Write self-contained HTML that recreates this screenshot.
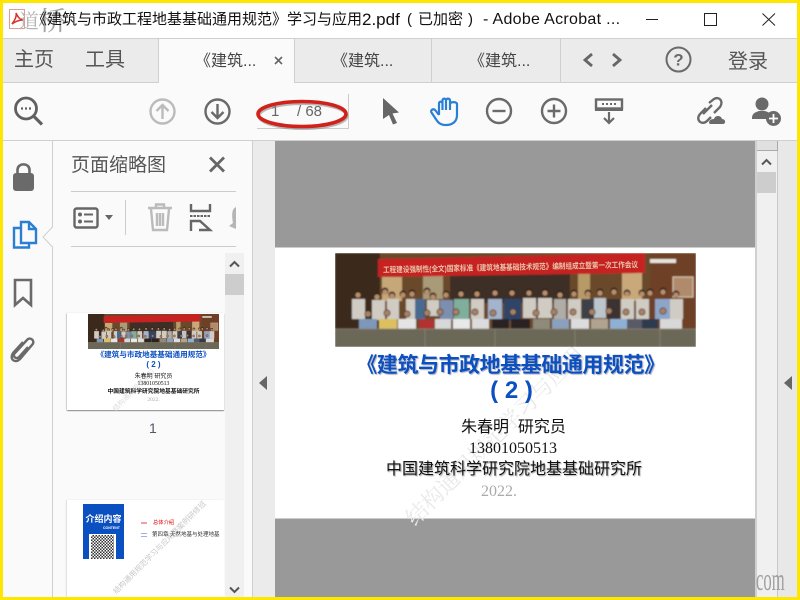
<!DOCTYPE html>
<html><head><meta charset="utf-8"><style>
*{margin:0;padding:0;box-sizing:border-box}
html,body{width:800px;height:600px;overflow:hidden;background:#fff}
body{position:relative;font-family:"Liberation Sans","Noto Sans CJK SC",sans-serif}
.a{position:absolute;white-space:nowrap}
svg{position:absolute;overflow:visible}
.t{font-size:18px;color:#555;line-height:24px}
.s{font-family:"Liberation Serif","Noto Sans CJK SC",serif}
.ti{font-size:15px;line-height:22px;color:#111;top:9px}
</style></head><body>
<div class="a" style="left:0;top:38px;width:800px;height:45px;background:#ebebeb;border-top:1px solid #cfcfcf;border-bottom:1px solid #cfcfcf"></div>
<div class="a" style="left:158px;top:38px;width:137px;height:45px;background:#fafafa;border:1px solid #cfcfcf;border-bottom:0"></div>
<div class="a" style="left:431px;top:39px;width:1px;height:43px;background:#cfcfcf"></div>
<div class="a" style="left:560px;top:39px;width:1px;height:43px;background:#cfcfcf"></div>
<div class="a" style="left:0;top:83px;width:800px;height:58px;background:#fafafa;border-bottom:1px solid #cfcfcf"></div>

<svg style="left:9px;top:9px" width="16" height="20" viewBox="0 0 16 20"><path d="M.5.5H15.500V19.500H.5Z" fill="#fff" stroke="#e09a90"/><path d="M3 15C6 11 8 7 7 4C9 8 10 10 14 11C10 11 7 12 3 15Z" fill="none" stroke="#d8332a" stroke-width="1.500"/></svg>
<div class="a" style="left:19px;top:7px;font-size:20px;line-height:26px;color:#b5b5b5;font-family:'Noto Serif CJK SC',serif">道</div>
<div class="a" style="left:38px;top:6px;font-size:26px;line-height:28px;color:#a0a0a0;font-family:'Noto Serif CJK SC',serif;transform:scaleX(1.15);transform-origin:0 0">桥</div>
<div class="a ti" style="left:32px">《建筑与市政工程地基基础通用规范》学习与应用</div>
<div class="a" style="left:362px;top:9px;font-size:17px;line-height:22px;color:#111">2.pdf</div>
<div class="a ti" style="left:407px">(</div>
<div class="a ti" style="left:418px">已加密</div>
<div class="a ti" style="left:468px">)</div>
<div class="a" style="left:483px;top:9px;font-size:16px;line-height:22px;color:#111;letter-spacing:.3px">- Adobe Acrobat ...</div>
<svg style="left:646px;top:19px" width="12" height="2"><path d="M0 .5H12" stroke="#222"/></svg>
<svg style="left:704px;top:13px" width="13" height="13"><rect x=".5" y=".5" width="12" height="12" fill="none" stroke="#222"/></svg>
<svg style="left:762px;top:13px" width="14" height="13"><path d="M.5.5L13 12.500M13 .5L.5 12.500" stroke="#222"/></svg>

<div class="a t" style="left:14px;top:48px;font-size:20px;color:#555">主页</div>
<div class="a t" style="left:85px;top:48px;font-size:20px;color:#555">工具</div>
<div class="a t" style="left:195px;top:50px;font-size:16px;color:#444">《建筑...</div>
<svg style="left:274px;top:56px" width="9" height="9"><path d="M1 1L8 8M8 1L1 8" stroke="#666" stroke-width="1.600"/></svg>
<div class="a t" style="left:332px;top:50px;font-size:16px;color:#444">《建筑...</div>
<div class="a t" style="left:469px;top:50px;font-size:16px;color:#444">《建筑...</div>
<svg style="left:582px;top:52px" width="40" height="16"><path d="M10 2L3 8L10 14M31 2L38 8L31 14" fill="none" stroke="#666" stroke-width="2.800"/></svg>
<svg style="left:665px;top:46px" width="28" height="28"><circle cx="13.500" cy="13.500" r="12" fill="none" stroke="#6a6a6a" stroke-width="2"/><text x="13.500" y="19.500" text-anchor="middle" font-size="17" font-weight="700" fill="#6a6a6a" font-family="Liberation Sans">?</text></svg>
<div class="a t" style="left:728px;top:50px;font-size:20px;color:#555">登录</div>

<svg style="left:14px;top:97px" width="30" height="30" fill="none" stroke="#606060"><circle cx="12" cy="11.500" r="10.500" stroke-width="2.800"/><path d="M19.500 19L28 27.500" stroke-width="3.200"/><path d="M7 11.500H17" stroke-width="2.200" stroke-dasharray="2 2"/></svg>
<svg style="left:149px;top:98px" width="27" height="27" fill="none" stroke="#bbb" stroke-width="2.400"><circle cx="13.500" cy="13.500" r="12"/><path d="M13.500 21V7M7.500 13L13.500 7L19.500 13"/></svg>
<svg style="left:204px;top:98px" width="27" height="27" fill="none" stroke="#6a6a6a" stroke-width="2.400"><circle cx="13.500" cy="13.500" r="12"/><path d="M13.500 6V20M7.500 14L13.500 20L19.500 14"/></svg>
<div class="a" style="left:257px;top:128px;width:92px;height:1px;background:#ccc"></div>
<div class="a" style="left:348px;top:94px;width:1px;height:35px;background:#ccc"></div>
<div class="a" style="left:271px;top:103px;font-size:15px;line-height:18px;color:#666">1</div>
<div class="a" style="left:297px;top:103px;font-size:15px;line-height:18px;color:#666">/ 68</div>
<svg style="left:256px;top:98px" width="96" height="34"><ellipse cx="47" cy="18" rx="44" ry="12.500" fill="none" stroke="#888" stroke-width="3" opacity=".6"/><ellipse cx="46" cy="16" rx="44" ry="12.500" fill="none" stroke="#d2201a" stroke-width="3.600"/></svg>
<svg style="left:382px;top:98px" width="18" height="27"><path d="M1 0L17 14.500L10.500 15.500L15 25L11 26.500L7 17L1 21Z" fill="#666"/></svg>
<svg style="left:430px;top:97px" width="29" height="30" fill="none" stroke="#2a7fd5" stroke-width="2.200"><path d="M9 18V6.500C9 4 12.500 4 12.500 6.500V13M12.500 13V3.500C12.500 1 16 1 16 3.500V13M16 13V3.500C16 1 20 1 20 3.500V13M20 13V7C20 4.500 27 4.500 27 7V18C27 25 22 28 16 28C10 28 8 25.500 5.500 21.500L1.500 15.500C0 13 3.500 11 5.500 13.500L9 18"/></svg>
<svg style="left:486px;top:98px" width="27" height="27" fill="none" stroke="#6a6a6a" stroke-width="2.400"><circle cx="13" cy="13" r="12"/><path d="M6.500 13H19.500"/></svg>
<svg style="left:541px;top:98px" width="27" height="27" fill="none" stroke="#6a6a6a" stroke-width="2.400"><circle cx="13" cy="13" r="12"/><path d="M6.500 13H19.500M13 6.500V19.500"/></svg>
<svg style="left:595px;top:98px" width="28" height="27"><rect x="1" y="1.500" width="26" height="9" fill="none" stroke="#6a6a6a" stroke-width="2.400"/><path d="M7 6H21" stroke="#6a6a6a" stroke-width="2" stroke-dasharray="2 2"/><path d="M0 12H28" stroke="#6a6a6a" stroke-width="2"/><path d="M14 14V25M9 20L14 25L19 20" fill="none" stroke="#6a6a6a" stroke-width="2.200"/></svg>
<svg style="left:695px;top:97px" width="32" height="29" fill="none" stroke="#6a6a6a" stroke-width="2.400"><path d="M11 11L5 17C0 23 7 29 12 24L16 20M8 17L17 8M14 6L19 2C24 -1 29 4 25 10L19 16"/><path d="M14 26C14 22 18 22 19 22C20 18 26 18 27 22C31 22 31 27 28 27H15Z" fill="#6a6a6a" stroke="none"/></svg>
<svg style="left:751px;top:97px" width="31" height="30"><circle cx="11" cy="7" r="6.500" fill="#6a6a6a"/><path d="M1 21C1 16 5 15 8 14H14C17 15 19 16 20 17C17 19 16 21 16 22H1Z" fill="#6a6a6a"/><circle cx="22.500" cy="21.500" r="7.500" fill="#6a6a6a"/><path d="M18 21.500H27M22.500 17V26" stroke="#fff" stroke-width="1.800"/></svg>

<!-- left rail -->
<div class="a" style="left:0;top:141px;width:53px;height:459px;background:#fafafa;border-right:1px solid #cfcfcf"></div>
<div class="a" style="left:53px;top:141px;width:200px;height:459px;background:#fafafa;border-right:1px solid #cfcfcf"></div>
<div class="a" style="left:253px;top:141px;width:22px;height:459px;background:#ebebeb"></div>
<svg style="left:12px;top:162px" width="23" height="30"><path d="M5.500 12V8C5.500 0.500 17.500 0.500 17.500 8V12" fill="none" stroke="#6a6a6a" stroke-width="2.600"/><rect x="1" y="11" width="21" height="18" rx="3" fill="#6a6a6a"/></svg>
<svg style="left:12px;top:220px" width="26" height="30" fill="none" stroke="#2a7fd5" stroke-width="2.400"><path d="M9 2H17L24 9V23H9Z"/><path d="M17 2V9H24"/><path d="M9 8H2V27.500H17V23"/></svg>
<svg style="left:42px;top:226px" width="12" height="22"><path d="M11 .5L1 11L11 21.500" fill="#fafafa" stroke="#cfcfcf"/></svg>
<svg style="left:13px;top:278px" width="20" height="30"><path d="M2 2H18V27L10 20L2 27Z" fill="none" stroke="#6a6a6a" stroke-width="2.600"/></svg>
<svg style="left:10px;top:335px" width="26" height="29" fill="none" stroke="#6a6a6a" stroke-width="2.400"><path d="M18 12L9 22C6 25 2 21 5 18L17 5C20 1 26 6 22 10L10 24C5 29 -1 24 3 18L13 7"/></svg>

<div class="a" style="left:71px;top:153px;font-size:19px;line-height:26px;color:#555">页面缩略图</div>
<svg style="left:208px;top:156px" width="18" height="17"><path d="M2 1.500L16 15.500M16 1.500L2 15.500" stroke="#666" stroke-width="2.800"/></svg>
<div class="a" style="left:71px;top:191px;width:165px;height:1px;background:#ccc"></div>
<div class="a" style="left:71px;top:246px;width:165px;height:1px;background:#ccc"></div>
<div class="a" style="left:125px;top:200px;width:1px;height:35px;background:#ccc"></div>
<svg style="left:73px;top:207px" width="42" height="22"><rect x="1.500" y="1.500" width="23" height="19" rx="2" fill="none" stroke="#666" stroke-width="2.400"/><circle cx="7" cy="7.500" r="2" fill="#666"/><circle cx="7" cy="14.500" r="2" fill="#666"/><path d="M11 7.500H20M11 14.500H20" stroke="#666" stroke-width="2"/><path d="M32 8H40L36 13Z" fill="#666"/></svg>
<svg style="left:147px;top:203px" width="26" height="28" fill="none" stroke="#bbb" stroke-width="2.400"><path d="M1 5H25M9 5V1.500H17V5M4 6L6 27H20L22 6M10 10V23M13 10V23M16 10V23"/></svg>
<svg style="left:189px;top:204px" width="23" height="28" fill="none" stroke="#666" stroke-width="2.400"><path d="M2 0V7H21V0"/><path d="M1 12H22" stroke-width="2" stroke-dasharray="2.500 1"/><path d="M2 27V17H11L21 26H10"/></svg>
<svg style="left:229px;top:207px" width="7" height="24"><path d="M7 0C2 2 3 10 4 16L0 19L7 22Z" fill="#b5b5b5"/></svg>

<!-- thumb scrollbar -->
<div class="a" style="left:225px;top:253px;width:19px;height:347px;background:#f0f0f0"></div>
<div class="a" style="left:225px;top:274px;width:19px;height:21px;background:#cdcdcd"></div>
<svg style="left:229px;top:260px" width="11" height="8"><path d="M1 6.500L5.500 2L10 6.500" fill="none" stroke="#555" stroke-width="2"/></svg>
<svg style="left:229px;top:586px" width="11" height="8"><path d="M1 1.500L5.500 6L10 1.500" fill="none" stroke="#555" stroke-width="2"/></svg>

<!-- thumb 1 -->
<div class="a" style="left:67px;top:313px;width:157px;height:97px;background:#fff;box-shadow:0 1px 1px #888,-1px 0 1px #ddd;overflow:hidden"></div>
<svg style="left:88px;top:314px" width="131" height="35" viewBox="0 0 361 94" preserveAspectRatio="none"><use href="#photo" filter="url(#bl)"/></svg>
<div class="a" style="left:112px;top:408px;font-size:7px;line-height:8px;color:#ddd;transform:rotate(-45deg);transform-origin:0 0">结构通用规范学习</div>
<div class="a" style="left:75px;top:349px;width:157px;text-align:center;font-size:7.600px;font-weight:700;color:#0b50c0;line-height:12px">《建筑与市政地基基础通用规范》</div>
<div class="a" style="left:75px;top:359px;width:157px;text-align:center;font-size:8px;font-weight:700;color:#0b50c0;line-height:12px">( 2 )</div>
<div class="a" style="left:75px;top:373px;width:157px;text-align:center;font-size:6px;color:#111;line-height:9px">朱春明&nbsp;研究员</div>
<div class="a s" style="left:75px;top:380px;width:157px;text-align:center;font-size:5.800px;color:#111;line-height:9px">13801050513</div>
<div class="a" style="left:75px;top:388px;width:157px;text-align:center;font-size:5.750px;color:#111;font-weight:700;line-height:9px">中国建筑科学研究院地基基础研究所</div>
<div class="a s" style="left:75px;top:396px;width:157px;text-align:center;font-size:5.500px;color:#aaa;line-height:9px">2022.</div>
<div class="a" style="left:149px;top:420px;font-size:14px;line-height:16px;color:#556">1</div>

<!-- thumb 2 -->
<div class="a" style="left:67px;top:500px;width:157px;height:100px;background:#fff;box-shadow:-1px 0 1px #ddd"></div>
<div class="a" style="left:112px;top:590px;font-size:7.500px;line-height:8px;color:#c8c8c8;transform:rotate(-45deg);transform-origin:0 0">结构通用规范学习与应用暨案例研修班</div>
<div class="a" style="left:83px;top:504px;width:41px;height:55px;background:#0b50c0"></div>
<div class="a" style="left:83px;top:513px;width:41px;text-align:center;font-size:9px;font-weight:700;color:#fff;line-height:13px">介绍内容</div>
<div class="a" style="left:103px;top:526px;font-size:3.500px;line-height:5px;font-weight:700;color:#fff">CONTENT</div>
<div class="a" style="left:89px;top:534px;width:27px;height:26px;background:#fff"></div>
<div class="a" style="left:91px;top:535px;width:23px;height:24px;background:repeating-conic-gradient(#333 0 25%,#fff 0 50%) 0 0/3px 3px"></div>
<div class="a" style="left:141px;top:522px;width:6px;height:2px;background:#f3a0a0"></div>
<div class="a" style="left:153px;top:519px;font-size:5.300px;line-height:8px;color:#d00">总体介绍</div>
<div class="a" style="left:141px;top:533px;width:6px;height:4px;border-top:1px solid #9bb5dc;border-bottom:1px solid #9bb5dc"></div>
<div class="a" style="left:152px;top:531px;font-size:5.500px;line-height:8px;color:#333">第四章 天然地基与处理地基</div>

<!-- main -->
<div class="a" style="left:275px;top:141px;width:480px;height:459px;background:#999"></div>
<div class="a" style="left:275px;top:247px;width:480px;height:272px;background:#fff;border-top:1px solid #ccc;border-bottom:1px solid #ccc"></div>
<div class="a" style="left:755px;top:141px;width:2px;height:459px;background:#d0d0d0"></div>
<div class="a" style="left:757px;top:141px;width:21px;height:459px;background:#f0f0f0"></div>
<div class="a" style="left:757px;top:141px;width:21px;height:10px;background:#e0e0e0;border-right:1px solid #aaa;border-bottom:1px solid #aaa"></div>
<div class="a" style="left:757px;top:172px;width:19px;height:21px;background:#cdcdcd"></div>
<svg style="left:761px;top:158px" width="11" height="8"><path d="M1 6.500L5.500 2L10 6.500" fill="none" stroke="#555" stroke-width="2"/></svg>
<div class="a" style="left:777px;top:151px;width:1px;height:449px;background:#c8c8c8"></div>
<div class="a" style="left:778px;top:141px;width:19px;height:459px;background:#e8e8e8"></div>
<svg style="left:259px;top:376px" width="9" height="14"><path d="M8 0V14L0 7Z" fill="#666"/></svg>
<svg style="left:784px;top:376px" width="9" height="14"><path d="M8 0V14L0 7Z" fill="#666"/></svg>

<div class="a" style="left:400px;top:512px;font-size:22px;line-height:26px;color:#e9e9e9;transform:rotate(-45deg);transform-origin:0 0;font-family:'Noto Serif CJK SC',serif">结构通用规范学习与应用</div>

<svg style="left:335px;top:253px;overflow:hidden" width="361" height="94" viewBox="0 0 361 94">
<defs><filter id="bl" x="0" y="0" width="1" height="1"><feGaussianBlur stdDeviation=".7" edgeMode="duplicate"/></filter><g id="photo">
<rect width="361" height="94" fill="#6b4a2c"/>
<rect width="45" height="78" fill="#3a2a1c"/>
<rect x="47" y="24" width="20" height="24" fill="#c6a878"/>
<rect x="88" y="22" width="20" height="24" fill="#a99a78"/>
<rect x="115" y="20" width="120" height="30" fill="#3d2f28"/>
<rect x="243" y="20" width="12" height="26" fill="#b89a68"/>
<rect x="287" y="20" width="20" height="28" fill="#c9a97a"/>
<rect x="315" y="0" width="46" height="78" fill="#6e3f26"/>
<rect x="338" y="24" width="20" height="20" fill="#b08a6a" stroke="#d8c8b0"/>
<rect x="315" y="6" width="26" height="4" fill="#e8e4da"/>
<path d="M43 6L310 0V20L43 24Z" fill="#c62222"/>
<g fill="#d0ccc4">
<rect x="17" y="46" width="13" height="20"/><rect x="37" y="47" width="13" height="20"/><rect x="52" y="46" width="12" height="20"/><rect x="71" y="46" width="13" height="20"/><rect x="92" y="47" width="12" height="16"/><rect x="136" y="46" width="13" height="20"/><rect x="188" y="45" width="13" height="20"/><rect x="203" y="45" width="14" height="20"/><rect x="219" y="46" width="12" height="20" fill="#b0aca6"/><rect x="233" y="46" width="13" height="20"/><rect x="259" y="45" width="12" height="20" fill="#bcc4cc"/><rect x="286" y="46" width="13" height="20"/><rect x="301" y="46" width="13" height="20"/><rect x="335" y="46" width="13" height="20"/>
</g>
<rect x="105" y="47" width="13" height="20" fill="#7d8fae"/><rect x="119" y="46" width="15" height="20" fill="#7fae9c"/><rect x="153" y="46" width="14" height="20" fill="#a3b4cc"/><rect x="169" y="46" width="17" height="22" fill="#2f4468"/><rect x="80" y="46" width="10" height="20" fill="#4a6a90"/><rect x="247" y="46" width="12" height="20" fill="#3a3f4a"/><rect x="272" y="46" width="13" height="20" fill="#3a3230"/><rect x="320" y="46" width="15" height="20" fill="#8ea5c8"/>
<g fill="#2a2018"><circle cx="23" cy="41" r="3.500"/><circle cx="42" cy="43" r="3.500"/><circle cx="50" cy="38" r="3.500"/><circle cx="57" cy="42" r="3.500"/><circle cx="68" cy="41" r="3.500"/><circle cx="77" cy="40" r="3.500"/><circle cx="92" cy="38" r="3.500"/><circle cx="98" cy="43" r="3.500"/><circle cx="111" cy="41" r="3.500"/><circle cx="126" cy="40" r="3.500"/><circle cx="142" cy="40" r="3.500"/><circle cx="160" cy="39" r="3.500"/><circle cx="177" cy="39" r="3.500"/><circle cx="194" cy="39" r="3.500"/><circle cx="210" cy="39" r="3.500"/><circle cx="225" cy="41" r="3.500"/><circle cx="239" cy="40" r="3.500"/><circle cx="253" cy="40" r="3.500"/><circle cx="265" cy="39" r="3.500"/><circle cx="279" cy="38" r="3.500"/><circle cx="292" cy="40" r="3.500"/><circle cx="307" cy="40" r="3.500"/><circle cx="315" cy="39" r="3.500"/><circle cx="328" cy="38" r="3.500"/><circle cx="341" cy="41" r="3.500"/></g>
<g fill="#b98e6c"><circle cx="23" cy="42" r="2.600"/><circle cx="42" cy="44" r="2.600"/><circle cx="50" cy="39" r="2.600"/><circle cx="57" cy="43" r="2.600"/><circle cx="68" cy="42" r="2.600"/><circle cx="77" cy="41" r="2.600"/><circle cx="92" cy="39" r="2.600"/><circle cx="98" cy="44" r="2.600"/><circle cx="111" cy="42" r="2.600"/><circle cx="126" cy="41" r="2.600"/><circle cx="142" cy="41" r="2.600"/><circle cx="160" cy="40" r="2.600"/><circle cx="177" cy="40" r="2.600"/><circle cx="194" cy="40" r="2.600"/><circle cx="210" cy="40" r="2.600"/><circle cx="225" cy="42" r="2.600"/><circle cx="239" cy="41" r="2.600"/><circle cx="253" cy="41" r="2.600"/><circle cx="265" cy="40" r="2.600"/><circle cx="279" cy="39" r="2.600"/><circle cx="292" cy="41" r="2.600"/><circle cx="307" cy="41" r="2.600"/><circle cx="315" cy="40" r="2.600"/><circle cx="328" cy="39" r="2.600"/><circle cx="341" cy="42" r="2.600"/></g>
<rect x="24" y="66" width="18" height="12" fill="#7f97b8"/><rect x="44" y="66" width="18" height="12" fill="#dcc060"/><rect x="63" y="66" width="18" height="12" fill="#e4e4e4"/><rect x="84" y="66" width="15" height="12" fill="#b03030"/><rect x="100" y="66" width="16" height="12" fill="#d8d8d8"/><rect x="118" y="66" width="17" height="12" fill="#e8e8e8"/><rect x="137" y="66" width="17" height="12" fill="#dcdcdc"/><rect x="157" y="66" width="17" height="12" fill="#2a2222"/><rect x="176" y="66" width="19" height="12" fill="#2a2220"/><rect x="198" y="66" width="17" height="12" fill="#8f8a7a"/><rect x="217" y="66" width="17" height="12" fill="#8ba0bd"/><rect x="236" y="66" width="18" height="12" fill="#dcdcdc"/><rect x="256" y="66" width="17" height="12" fill="#b0a490"/><rect x="275" y="66" width="17" height="12" fill="#8fb0d5"/><rect x="292" y="66" width="15" height="12" fill="#5a5a66"/><rect x="307" y="66" width="16" height="12" fill="#2f3a50"/><rect x="325" y="66" width="22" height="12" fill="#d8d8d8"/>
<g fill="#a98066" stroke="#2a2018" stroke-width=".6"><circle cx="33" cy="61" r="3.200"/><circle cx="52" cy="60" r="3.200"/><circle cx="72" cy="61" r="3.200"/><circle cx="92" cy="60" r="3.200"/><circle cx="105" cy="59" r="3.200"/><circle cx="121" cy="59" r="3.200"/><circle cx="140" cy="59" r="3.200"/><circle cx="158" cy="60" r="3.200"/><circle cx="178" cy="59" r="3.200"/><circle cx="201" cy="60" r="3.200"/><circle cx="219" cy="59" r="3.200"/><circle cx="238" cy="59" r="3.200"/><circle cx="257" cy="59" r="3.200"/><circle cx="274" cy="58" r="3.200"/><circle cx="291" cy="59" r="3.200"/><circle cx="307" cy="59" r="3.200"/><circle cx="328" cy="58" r="3.200"/></g>
<rect y="76" width="361" height="18" fill="#6c6759"/>
<path d="M0 76H361M90 76V94M160 76V94M240 76V94M325 76V94" stroke="#8a8574" stroke-width=".8"/>
</g></defs>
<use href="#photo" filter="url(#bl)"/>
<text x="48" y="17" textLength="255" lengthAdjust="spacingAndGlyphs" transform="rotate(-1.200 175 14)" font-size="8" font-weight="700" fill="#e8c4a8" font-family="Liberation Sans,Noto Sans CJK SC,sans-serif">工程建设强制性(全文)国家标准《建筑地基基础技术规范》编制组成立暨第一次工作会议</text>
</svg>

<div class="a" style="left:330px;top:352px;width:361px;text-align:center;font-size:21px;font-weight:700;color:#0b50c0;line-height:28px;letter-spacing:-.45px;text-shadow:1px 1px 1px #aab">《建筑与市政地基基础通用规范》</div>
<div class="a" style="left:331px;top:377px;width:361px;text-align:center;font-size:24px;font-weight:700;color:#0b50c0;line-height:28px">( 2 )</div>
<div class="a" style="left:461px;top:417px;font-size:16px;line-height:22px;color:#111">朱春明&nbsp;&nbsp;研究员</div>
<div class="a s" style="left:469px;top:438px;font-size:16px;line-height:22px;color:#111">13801050513</div>
<div class="a" style="left:386px;top:459px;font-size:16px;line-height:22px;color:#111;text-shadow:1px 1px 1px #aaa">中国建筑科学研究院地基基础研究所</div>
<div class="a s" style="left:481px;top:481px;font-size:16px;line-height:22px;color:#aaa">2022.</div>
<div class="a s" style="left:756px;top:563px;font-size:32px;line-height:32px;color:#a0a0a0;transform:scaleX(.52);transform-origin:0 0">com</div>

<!-- yellow frame -->
<div class="a" style="left:0;top:0;width:800px;height:3px;background:#ffe600"></div>
<div class="a" style="left:0;top:597px;width:800px;height:3px;background:#ffe600"></div>
<div class="a" style="left:0;top:0;width:3px;height:600px;background:#ffe600"></div>
<div class="a" style="left:797px;top:0;width:3px;height:600px;background:#ffe600"></div>
</body></html>
